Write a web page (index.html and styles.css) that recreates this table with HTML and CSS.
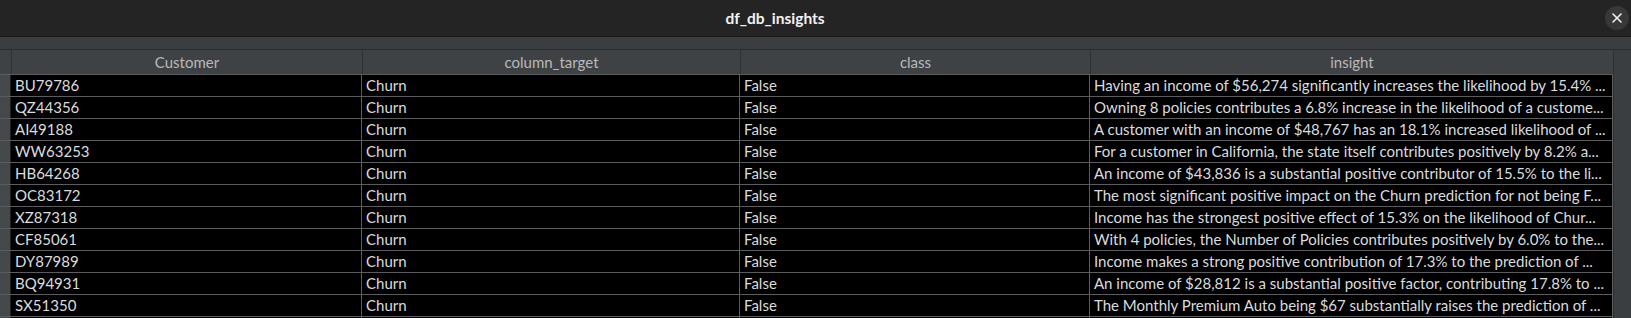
FILE: index.html
```html
<!DOCTYPE html>
<html lang="en">
<head>
<meta charset="utf-8">
<title>df_db_insights</title>
<link rel="stylesheet" href="styles.css">
</head>
<body>
<div class="win">
  <header class="titlebar">
    <div class="title">df_db_insights</div>
    <div class="close" aria-label="Close">
      <svg width="22" height="22" viewBox="0 0 22 22"><path d="M7 7 L15 15 M15 7 L7 15" stroke="#f0f0f0" stroke-width="1.6" stroke-linecap="round" fill="none"/></svg>
    </div>
  </header>
  <div class="band"></div>
  <div class="body">
    <div class="table">
      <div class="row head">
        <div class="rh"></div>
        <div class="th">Customer</div>
        <div class="th">column_target</div>
        <div class="th">class</div>
        <div class="th">insight</div>
      </div>
      <div class="row"><div class="rh"></div><div class="td">BU79786</div><div class="td">Churn</div><div class="td">False</div><div class="td">Having an income of $56,274 significantly increases the likelihood by 15.4% ...</div></div>
      <div class="row"><div class="rh"></div><div class="td">QZ44356</div><div class="td">Churn</div><div class="td">False</div><div class="td">Owning 8 policies contributes a 6.8% increase in the likelihood of a custome...</div></div>
      <div class="row"><div class="rh"></div><div class="td">AI49188</div><div class="td">Churn</div><div class="td">False</div><div class="td">A customer with an income of $48,767 has an 18.1% increased likelihood of ...</div></div>
      <div class="row"><div class="rh"></div><div class="td">WW63253</div><div class="td">Churn</div><div class="td">False</div><div class="td">For a customer in California, the state itself contributes positively by 8.2% a...</div></div>
      <div class="row"><div class="rh"></div><div class="td">HB64268</div><div class="td">Churn</div><div class="td">False</div><div class="td">An income of $43,836 is a substantial positive contributor of 15.5% to the li...</div></div>
      <div class="row"><div class="rh"></div><div class="td">OC83172</div><div class="td">Churn</div><div class="td">False</div><div class="td">The most significant positive impact on the Churn prediction for not being F...</div></div>
      <div class="row"><div class="rh"></div><div class="td">XZ87318</div><div class="td">Churn</div><div class="td">False</div><div class="td">Income has the strongest positive effect of 15.3% on the likelihood of Chur...</div></div>
      <div class="row"><div class="rh"></div><div class="td">CF85061</div><div class="td">Churn</div><div class="td">False</div><div class="td">With 4 policies, the Number of Policies contributes positively by 6.0% to the...</div></div>
      <div class="row"><div class="rh"></div><div class="td">DY87989</div><div class="td">Churn</div><div class="td">False</div><div class="td">Income makes a strong positive contribution of 17.3% to the prediction of ...</div></div>
      <div class="row"><div class="rh"></div><div class="td">BQ94931</div><div class="td">Churn</div><div class="td">False</div><div class="td">An income of $28,812 is a substantial positive factor, contributing 17.8% to ...</div></div>
      <div class="row"><div class="rh"></div><div class="td">SX51350</div><div class="td">Churn</div><div class="td">False</div><div class="td">The Monthly Premium Auto being $67 substantially raises the prediction of ...</div></div>
      <div class="row"><div class="rh"></div><div class="td"></div><div class="td"></div><div class="td"></div><div class="td"></div></div>
    </div>
    <div class="vscroll"></div>
  </div>
</div>
</body>
</html>
```
FILE: styles.css
```css
html, body {
  margin: 0;
  padding: 0;
  background: #3b3e40;
  overflow: hidden;
}
.win {
  width: 1631px;
  height: 318px;
  overflow: hidden;
  font-family: Lato, "Open Sans", sans-serif;
  display: flex;
  flex-direction: column;
}
.titlebar {
  height: 36px;
  flex: none;
  background: #242424;
  border-bottom: 1px solid #191919;
  display: flex;
  align-items: center;
}
.title {
  flex: 1;
  text-align: center;
  padding-right: 55px;
  color: #f2f2f2;
  font-weight: 700;
  font-size: 15.5px;
}
.close {
  width: 24px;
  height: 24px;
  margin-right: 2px;
  border-radius: 50%;
  background: #383838;
  display: flex;
  align-items: center;
  justify-content: center;
}
.band {
  height: 12px;
  flex: none;
  background: #3b3e40;
  border-bottom: 1px solid #2a2c2d;
}
.body {
  flex: 1;
  display: flex;
  min-height: 0;
}
.table {
  width: 1613px;
  flex: none;
  background: #000;
  overflow: hidden;
}
.vscroll {
  flex: 1;
  background: #3b3e40;
  border-left: 1px solid #2e3032;
}
.row {
  display: grid;
  grid-template-columns: 11px 351px 378px 350px 523px;
  height: 22px;
  box-sizing: border-box;
  border-bottom: 1px solid #5a5c5e;
}
.row.head {
  height: 25px;
  background: #3f4244;
  border-bottom: 1px solid #5a5c5e;
}
.rh {
  background: #46494b;
  border-right: 1px solid #1e1f20;
}
.head .rh {
  background: #3f4244;
  border-right: none;
}
.th {
  color: #b7b9bb;
  font-size: 15px;
  line-height: 25px;
  text-align: center;
  border-left: 1px solid #2e3032;
  white-space: nowrap;
  overflow: hidden;
}
.head .th:first-of-type {
  border-left: none;
}
.td {
  color: #d9dcde;
  font-size: 15px;
  line-height: 21px;
  padding-left: 4px;
  white-space: nowrap;
  overflow: hidden;
  border-right: 1px solid #5a5c5e;
}
```
